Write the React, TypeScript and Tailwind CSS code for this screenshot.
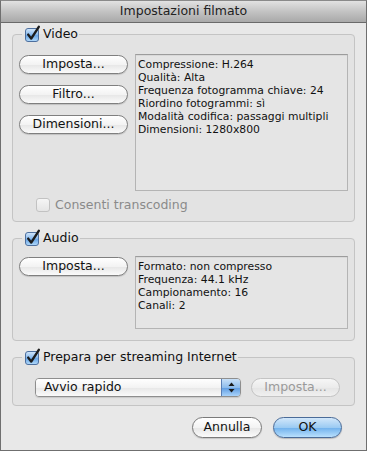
import React from "react";

const font = { fontFamily: '"DejaVu Sans", "Lucida Grande", Verdana, sans-serif' };

function CheckOn() {
  return (
    <svg width="16" height="16" viewBox="0 0 16 16" className="shrink-0 overflow-visible">
      <defs>
        <linearGradient id="cbg" x1="0" y1="0" x2="0" y2="1">
          <stop offset="0" stopColor="#d5e8fb" />
          <stop offset="0.45" stopColor="#8dbdef" />
          <stop offset="0.55" stopColor="#6aa6e6" />
          <stop offset="1" stopColor="#b5dcfb" />
        </linearGradient>
      </defs>
      <rect x="1.5" y="2.5" width="13" height="13" rx="2.5" fill="url(#cbg)" stroke="#4d6f9e" />
      <path d="M4.2 8.6 L7.2 12.6 L14.8 0.8" fill="none" stroke="#1c1c1c" strokeWidth="2.4" strokeLinecap="round" strokeLinejoin="round" />
    </svg>
  );
}

function CheckOffDisabled() {
  return (
    <svg width="14" height="14" viewBox="0 0 14 14" className="shrink-0">
      <defs>
        <linearGradient id="cbd" x1="0" y1="0" x2="0" y2="1">
          <stop offset="0" stopColor="#f6f6f6" />
          <stop offset="1" stopColor="#e4e4e4" />
        </linearGradient>
      </defs>
      <rect x="0.5" y="0.5" width="13" height="13" rx="2.5" fill="url(#cbd)" stroke="#c2c2c2" />
    </svg>
  );
}

function Btn({ children, w, disabled }: { children: React.ReactNode; w: string; disabled?: boolean }) {
  return (
    <div
      className={`${w} h-[19px] rounded-full border flex items-center justify-center text-[12.5px] leading-none ${
        disabled
          ? "border-[#c4c4c4] text-[#9a9a9a] bg-[linear-gradient(#f6f6f6,#ebebeb_50%,#e4e4e4_51%,#f0f0f0)]"
          : "border-[#7f7f7f] text-[#111] bg-[linear-gradient(#ffffff,#f3f3f3_50%,#e6e6e6_51%,#fbfbfb)] shadow-[0_1px_1px_rgba(0,0,0,0.15)]"
      }`}
    >
      {children}
    </div>
  );
}

function Group({ label, children, className }: { label: React.ReactNode; children: React.ReactNode; className?: string }) {
  return (
    <fieldset className={`border border-[#c4c4c4] rounded-[4px] bg-[#e3e3e3] pl-[6px] pr-[6px] ${className ?? ""}`}>
      <legend className="h-[16px] ml-[3px] pl-[2px] pr-[1px] flex items-center gap-[3px] text-[12.5px] text-[#111]">
        <CheckOn />
        <span className="leading-none">{label}</span>
      </legend>
      {children}
    </fieldset>
  );
}

function Info({ lines, h }: { lines: string[]; h: string }) {
  return (
    <div className={`w-[213px] ${h} border border-[#b4b4b4] border-t-[#9c9c9c] bg-[#e5e5e5] pl-[2px] pt-[3px] text-[10.8px] leading-[13px] text-[#111] shadow-[inset_0_1px_0_rgba(0,0,0,0.05)]`}>
      {lines.map((l) => (
        <div key={l} className="whitespace-nowrap">{l}</div>
      ))}
    </div>
  );
}

export default function App() {
  return (
    <div style={font} className="w-[367px] h-[451px] box-border border border-[#6f6f6f] border-t-[#8a8a8a] bg-[#e8e8e8] flex flex-col">
      <div className="h-[22px] shrink-0 border-b border-[#6a6a6a] bg-[linear-gradient(#e2e2e2,#c3c3c3_50%,#a9a9a9)] flex items-center justify-center text-[12.5px] text-[#222]">
        Impostazioni filmato
      </div>
      <div className="px-[11px] pt-[3px] flex flex-col">
        <Group label="Video">
          <div className="flex gap-[7px] pt-[12px]">
            <div className="flex flex-col gap-[11px] pt-[1px]">
              <Btn w="w-[109px]">Imposta...</Btn>
              <Btn w="w-[109px]">Filtro...</Btn>
              <Btn w="w-[109px]">Dimensioni...</Btn>
            </div>
            <Info
              h="h-[137px]"
              lines={[
                "Compressione: H.264",
                "Qualità: Alta",
                "Frequenza fotogramma chiave: 24",
                "Riordino fotogrammi: sì",
                "Modalità codifica: passaggi multipli",
                "Dimensioni: 1280x800",
              ]}
            />
          </div>
          <div className="flex items-center gap-[5px] ml-[17px] mt-[7px] mb-[9px] h-[14px]">
            <CheckOffDisabled />
            <span className="text-[12.5px] text-[#8a8a8a] leading-none">Consenti transcoding</span>
          </div>
        </Group>
        <Group label="Audio" className="mt-[8px]">
          <div className="flex gap-[7px] pt-[10px] pb-[11px]">
            <div className="pt-[1px]">
              <Btn w="w-[109px]">Imposta...</Btn>
            </div>
            <Info
              h="h-[73px]"
              lines={["Formato: non compresso", "Frequenza: 44.1 kHz", "Campionamento: 16", "Canali: 2"]}
            />
          </div>
        </Group>
        <Group label="Prepara per streaming Internet" className="mt-[8px]">
          <div className="flex items-center gap-[10px] pt-[13px] pb-[8px] pl-[16px]">
            <div className="w-[206px] h-[19px] rounded-[4px] border border-[#8e8e8e] flex overflow-hidden shadow-[0_1px_1px_rgba(0,0,0,0.12)]">
              <div className="flex-1 bg-[linear-gradient(#ffffff,#f3f3f3_50%,#e7e7e7_51%,#fafafa)] flex items-center pl-[8px] text-[12.5px] text-[#111] leading-none">
                Avvio rapido
              </div>
              <div className="w-[19px] border-l border-[#5a7fb5] bg-[linear-gradient(#c8e0f8,#8dbcec_50%,#5d9ae0_51%,#a9d3fa)] flex items-center justify-center">
                <svg width="7" height="11" viewBox="0 0 7 11">
                  <path d="M3.5 0.5 L6.5 4 L0.5 4 Z" fill="#1a1a1a" />
                  <path d="M3.5 10.5 L6.5 7 L0.5 7 Z" fill="#1a1a1a" />
                </svg>
              </div>
            </div>
            <Btn w="w-[89px]" disabled>
              Imposta...
            </Btn>
          </div>
        </Group>
        <div className="flex justify-end gap-[11px] mt-[11px] pr-[13px]">
          <div className="w-[70px] h-[21px] rounded-full border border-[#7a7a7a] flex items-center justify-center text-[12.5px] text-[#111] leading-none bg-[linear-gradient(#ffffff,#f3f3f3_50%,#e6e6e6_51%,#fbfbfb)] shadow-[0_1px_1px_rgba(0,0,0,0.15)]">
            Annulla
          </div>
          <div className="w-[69px] h-[21px] rounded-full border border-[#4a6b98] flex items-center justify-center text-[12.5px] text-[#111] leading-none bg-[linear-gradient(#d2e7fa,#9ccbf3_50%,#6fb0ec_51%,#b9e0fd)] shadow-[0_1px_1px_rgba(0,0,0,0.2)]">
            OK
          </div>
        </div>
      </div>
    </div>
  );
}
